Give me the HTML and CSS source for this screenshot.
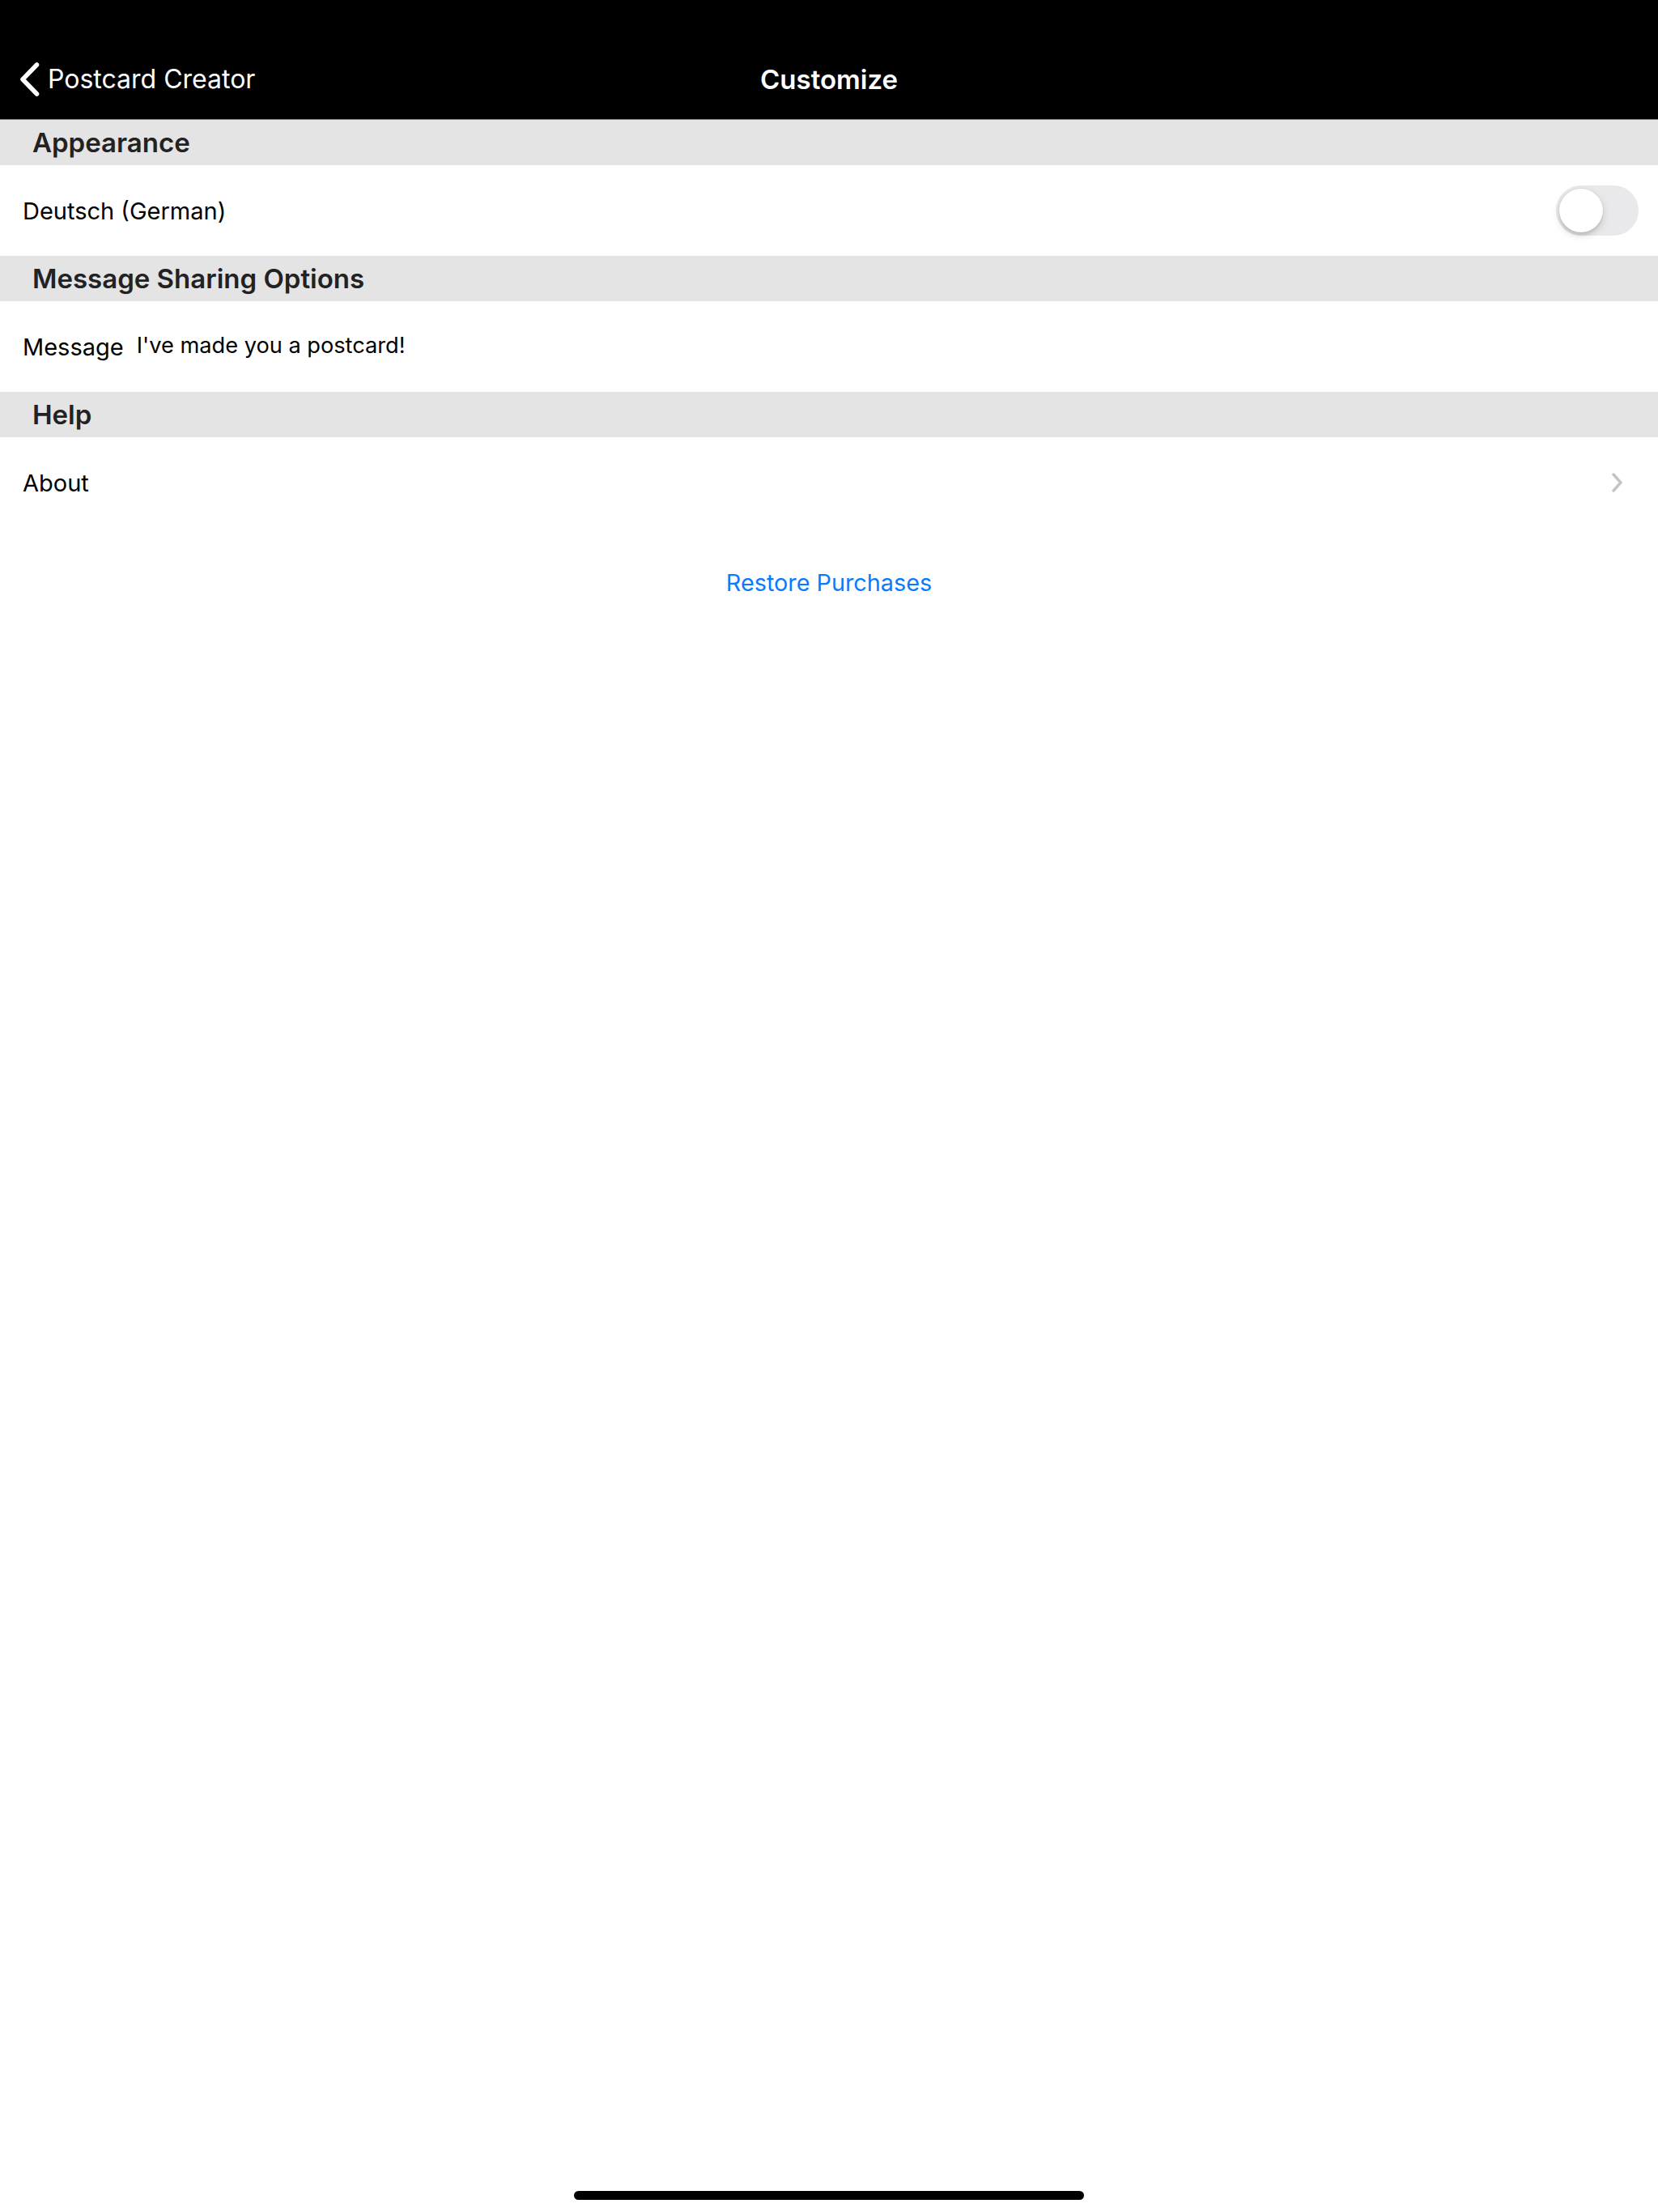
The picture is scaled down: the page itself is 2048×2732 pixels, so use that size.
FILE: index.html
```html
<!DOCTYPE html>
<html lang="en">
<head>
<meta charset="utf-8">
<title>Customize</title>
<link rel="stylesheet" href="styles.css">
</head>
<body>
<div class="screen">
  <header class="navbar">
    <div class="nav-row">
      <div class="nav-left">
        <a class="back">
          <svg class="back-chevron" width="25" height="42" viewBox="0 0 25 42"><polyline points="21.5,3 4,21 21.5,39" fill="none" stroke="#fff" stroke-width="5.5" stroke-linecap="round" stroke-linejoin="round"/></svg>
          <span class="back-label">Postcard Creator</span>
        </a>
      </div>
      <h1 class="nav-title">Customize</h1>
      <div class="nav-right"></div>
    </div>
  </header>

  <section class="group">
    <div class="group-header">Appearance</div>
    <div class="row">
      <span class="row-label">Deutsch (German)</span>
      <div class="switch"><div class="knob"></div></div>
    </div>
  </section>

  <section class="group">
    <div class="group-header">Message Sharing Options</div>
    <div class="row row-field">
      <span class="row-label">Message</span>
      <span class="field-value">I've made you a postcard!</span>
    </div>
  </section>

  <section class="group">
    <div class="group-header">Help</div>
    <div class="row">
      <span class="row-label">About</span>
      <svg class="disclosure" width="13" height="24" viewBox="0 0 13 24"><polyline points="2,2 11,12 2,22" fill="none" stroke="#c4c4c8" stroke-width="3.4" stroke-linecap="round" stroke-linejoin="round"/></svg>
    </div>
  </section>

  <div class="restore">Restore Purchases</div>

  <div class="spacer"></div>
  <div class="home-indicator"></div>
</div>
</body>
</html>
```

FILE: styles.css
```css
* { box-sizing: border-box; }

html, body {
  margin: 0;
  padding: 0;
  background: #ffffff;
}

body {
  font-family: "Inter", "Liberation Sans", sans-serif;
  color: #000;
}

.screen {
  width: 2048px;
  height: 2732px;
  display: flex;
  flex-direction: column;
  background: #fff;
}

.navbar {
  background: #000;
  padding-top: 48px;
  border-bottom: 1px solid #7a7a7a;
}

.nav-row {
  height: 99px;
  display: grid;
  grid-template-columns: 1fr auto 1fr;
  align-items: center;
}

.nav-left {
  display: flex;
  align-items: center;
}

.back {
  display: flex;
  align-items: center;
  gap: 10px;
  margin-left: 24px;
  color: #fff;
}

.back-chevron { display: block; }

.back-label {
  font-size: 32px;
  font-weight: 400;
  color: #fff;
}

.nav-title {
  margin: 0;
  font-size: 33px;
  font-weight: 600;
  color: #fff;
}

.group-header {
  height: 56px;
  background: #e4e4e4;
  display: flex;
  align-items: center;
  padding-left: 40px;
  font-size: 33px;
  font-weight: 600;
  color: #222;
}

.row {
  height: 112px;
  display: flex;
  align-items: center;
  justify-content: space-between;
  padding: 0 24px 0 28px;
  background: #fff;
}

.row-label {
  font-size: 29px;
  color: #000;
}

.row-field {
  justify-content: flex-start;
  gap: 16px;
}

.field-value {
  font-size: 27.2px;
  color: #000;
  margin-top: -4px;
}

.switch {
  width: 102px;
  height: 62px;
  border-radius: 31px;
  background: #e9e9eb;
  display: flex;
  align-items: center;
  padding: 4px;
}

.knob {
  width: 54px;
  height: 54px;
  border-radius: 50%;
  background: #fff;
  box-shadow: 0 4px 10px rgba(0,0,0,0.15), 0 4px 2px rgba(0,0,0,0.06), 0 0 0 1px rgba(0,0,0,0.04);
}

.disclosure {
  display: block;
  margin-right: 20px;
}

.restore {
  margin-top: 44px;
  height: 48px;
  line-height: 48px;
  text-align: center;
  font-size: 28.8px;
  color: #0a7aff;
}

.spacer { flex: 1; }

.home-indicator {
  width: 630px;
  height: 11px;
  border-radius: 6px;
  background: #000;
  margin: 0 auto 15px;
}
```
